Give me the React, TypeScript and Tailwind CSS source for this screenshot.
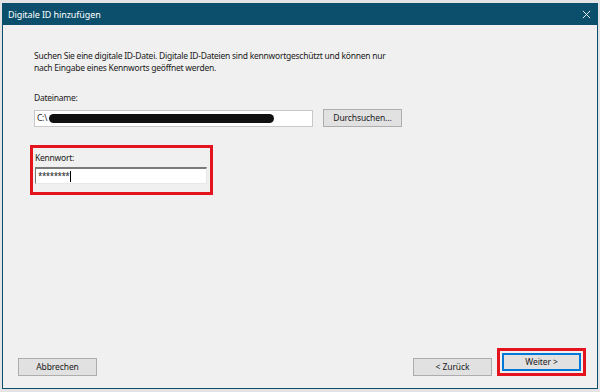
import React from 'react';

const font = { fontFamily: '"Noto Sans", "Open Sans", sans-serif' };

const Button = ({ label, focused = false }: { label: string; focused?: boolean }) => (
  <button
    className={
      'h-[18px] w-[79px] bg-[#e1e1e1] text-[8.5px] tracking-[-0.1px] leading-none text-[#1a1a1a] ' +
      (focused ? 'border-2 border-[#0078d7]' : 'border border-[#adadad]')
    }
  >
    {label}
  </button>
);

export default function App() {
  return (
    <div className="w-[600px] h-[392px] bg-[#e4e4e4] pt-[3px] pl-[2px] overflow-hidden" style={font}>
      <div className="w-[596px] h-[386px] border border-[#0b4f6c] bg-[#f0f0f0] flex flex-col">
        {/* title bar */}
        <div className="h-[21px] bg-[#0b4f6c] flex items-center justify-between pl-[5px] pr-[6px] shrink-0">
          <span className="text-white text-[9px] tracking-[-0.1px]">Digitale ID hinzufügen</span>
          <svg width="9" height="9" viewBox="0 0 10 10" className="text-white">
            <path d="M1 1 L9 9 M9 1 L1 9" stroke="currentColor" strokeWidth="1" fill="none" />
          </svg>
        </div>

        <div className="flex-1 flex flex-col pl-[31px] pr-[11px] pt-[25px] pb-[12px] text-[#1a1a1a] text-[8.5px] tracking-[-0.25px]">
          <p className="leading-[12px] whitespace-nowrap">
            Suchen Sie eine digitale ID-Datei. Digitale ID-Dateien sind kennwortgeschützt und können nur
            <br />
            nach Eingabe eines Kennworts geöffnet werden.
          </p>

          <div className="mt-[18px] leading-[12px]">Dateiname:</div>
          <div className="mt-[5px] flex items-center gap-[10px]">
            <div className="relative w-[279px] h-[17px] bg-white border border-[#c8c8c8] flex items-center px-[2px]">
              C:\
              <div className="absolute left-[14px] top-[3px] w-[225px] h-[9px] rounded-full bg-[#111]" />
            </div>
            <Button label="Durchsuchen..." />
          </div>

          <div className="mt-[18px] -ml-[4px] w-[183px] h-[50px] border-[3px] border-[#e4141e] pl-[2px] pt-[4px]">
            <div className="leading-[12px]">Kennwort:</div>
            <div className="mt-[3px] w-[172px] h-[17px] bg-white border-t-2 border-l border-[#7a7a7a] border-b border-r border-b-[#e8e8e8] border-r-[#e8e8e8] flex items-center pl-[2px] text-[8px] tracking-[-0.5px]">
              ********
              <span className="inline-block w-px h-[11px] bg-black ml-[1px]" />
            </div>
          </div>

          <div className="flex-1" />

          <div className="flex items-end">
            <div className="-ml-[16px]">
              <Button label="Abbrechen" />
            </div>
            <div className="flex-1" />
            <Button label="< Zurück" />
            <div className="ml-[5px] border-[3px] border-[#e4141e] p-[2px]">
              <Button label="Weiter >" focused />
            </div>
          </div>
        </div>
      </div>
    </div>
  );
}
